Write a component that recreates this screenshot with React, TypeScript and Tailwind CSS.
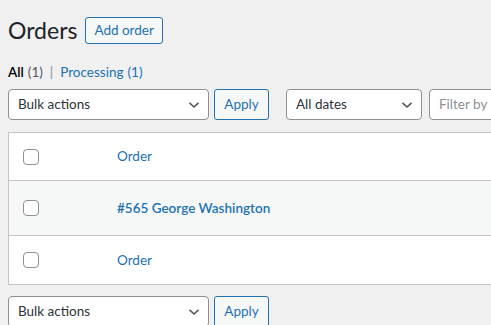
import React from 'react';

const font = { fontFamily: 'Lato, "Noto Sans", Arial, sans-serif' };

function Chevron() {
  return (
    <svg width="12" height="8" viewBox="0 0 12 8" className="shrink-0">
      <polyline points="1.5,1.8 6,6 10.5,1.8" fill="none" stroke="#50575e" strokeWidth="1.6" />
    </svg>
  );
}

function Select({ label, w }: { label: string; w: string }) {
  return (
    <div className={`flex h-[31px] items-center justify-between rounded-[4px] border border-[#8c8f94] bg-white pl-[9px] pr-[8px] text-[13.5px] text-[#2c3338] ${w}`}>
      <span>{label}</span>
      <Chevron />
    </div>
  );
}

function Apply() {
  return (
    <div className="flex h-[31px] w-[55px] items-center justify-center rounded-[3px] border border-[#2271b1] bg-[#f6f7f7] text-[13.5px] text-[#2271b1]">
      Apply
    </div>
  );
}

function Check() {
  return <span className="block h-4 w-4 shrink-0 rounded-[4px] border border-[#8c8f94] bg-white" />;
}

function Row({ children, striped, h }: { children: React.ReactNode; striped?: boolean; h: string }) {
  return (
    <div className={`flex items-center ${h} ${striped ? 'bg-[#f6f7f7]' : 'bg-white'}`}>
      <div className="w-[108px] shrink-0 pl-[14px]">
        <Check />
      </div>
      {children}
    </div>
  );
}

export default function App() {
  return (
    <div className="h-[325px] w-[491px] overflow-hidden bg-[#f0f0f1]" style={font}>
      <div className="w-[640px] pl-2">
        {/* title */}
        <div className="flex items-center gap-[8px] pt-[16px]">
          <h1 className="text-[23px] leading-[29px] text-[#1d2327]">Orders</h1>
          <div className="flex h-[27px] items-center rounded-[3px] border border-[#2271b1] bg-[#f6f7f7] px-[8px] text-[13.5px] text-[#2271b1]">
            Add order
          </div>
        </div>

        {/* filters */}
        <div className="mt-[18px] flex items-center text-[13.5px] leading-[18px]">
          <span className="font-semibold text-black">All</span>
          <span className="ml-1 text-[#50575e]">(1)</span>
          <span className="mx-[7px] text-[#8c8f94]">|</span>
          <span className="text-[#2271b1]">Processing</span>
          <span className="ml-1 text-[#2271b1]">(1)</span>
        </div>

        <div className="mt-[8px] flex items-center">
          <Select label="Bulk actions" w="w-[201px]" />
          <div className="ml-[5px]"><Apply /></div>
          <div className="ml-[17px]"><Select label="All dates" w="w-[136px]" /></div>
          <div className="ml-[7px] flex h-[31px] w-[180px] items-center rounded-[4px] border border-[#8c8f94] bg-white pl-[9px] text-[13.5px] text-[#8c8f94]">
            Filter by
          </div>
        </div>

        {/* table */}
        <div className="mt-[12px] border border-[#c3c4c7] text-[13.5px]">
          <Row h="h-[47px]">
            <span className="text-[#2271b1]">Order</span>
          </Row>
          <div className="border-t border-[#c3c4c7]" />
          <Row h="h-[54px]" striped>
            <span className="font-semibold text-[#2271b1]">#565 George Washington</span>
          </Row>
          <div className="border-t border-[#c3c4c7]" />
          <Row h="h-[48px]">
            <span className="text-[#2271b1]">Order</span>
          </Row>
        </div>

        <div className="mt-[11px] flex items-center">
          <Select label="Bulk actions" w="w-[201px]" />
          <div className="ml-[5px]"><Apply /></div>
        </div>
      </div>
    </div>
  );
}
